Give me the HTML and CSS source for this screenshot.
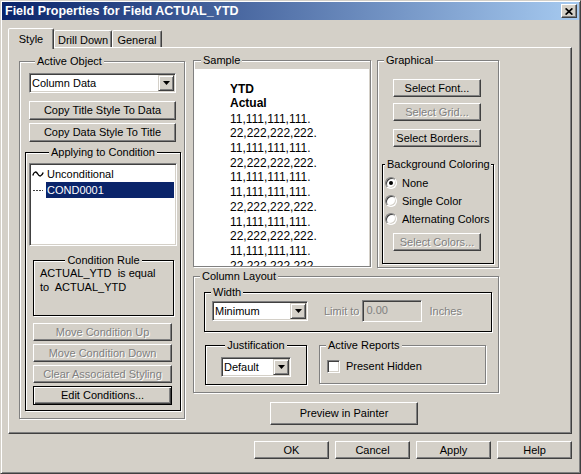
FILE: index.html
```html
<!DOCTYPE html>
<html>
<head>
<meta charset="utf-8">
<title>Field Properties</title>
<link rel="stylesheet" href="styles.css">
</head>
<body>
<div class="window">
  <div class="titlebar">
    <span class="title">Field Properties for Field ACTUAL_YTD</span>
    <div class="close"><svg width="8" height="7" viewBox="0 0 8 7"><path d="M0.6 0.4 L7.4 6.6 M7.4 0.4 L0.6 6.6" stroke="#000" stroke-width="1.7" fill="none"/></svg></div>
  </div>

  <div class="tabs">
    <div class="tab sel t-style">Style</div>
    <div class="tab t-drill">Drill Down</div>
    <div class="tab t-gen">General</div>
  </div>

  <div class="panel">
    <div class="grp g-active">
      <div class="lbl">Active Object</div>
      <div class="combo c-col"><span class="val">Column Data</span><span class="arrow"><svg width="7" height="4" viewBox="0 0 7 4"><path d="M0 0H7L3.5 4Z" fill="#000"/></svg></span></div>
      <div class="btn b-copy1">Copy Title Style To Data</div>
      <div class="btn b-copy2">Copy Data Style To Title</div>
      <div class="grp black g-apply">
        <div class="lbl center">Applying to Condition</div>
        <div class="listbox">
          <div class="lrow">
            <svg class="licon" width="12" height="12" viewBox="0 0 12 12"><path d="M0.8 7.5 C2 3.2, 4.2 3.2, 5.8 6 S 9.6 8.8, 11.2 4.6" stroke="#000" stroke-width="1.4" fill="none"/></svg>
            <span class="item">Unconditional</span>
          </div>
          <div class="lrow">
            <svg class="licon" width="12" height="12" viewBox="0 0 12 12"><path d="M1 6.5 H11" stroke="#404040" stroke-width="1.2" stroke-dasharray="2 1" fill="none"/></svg>
            <span class="item sel">COND0001</span>
          </div>
        </div>
        <div class="grp black g-rule">
          <div class="lbl center">Condition Rule</div>
          <div class="rule-text">ACTUAL_YTD  is equal
to  ACTUAL_YTD</div>
        </div>
        <div class="btn bc dis b-up">Move Condition Up</div>
        <div class="btn bc dis">Move Condition Down</div>
        <div class="btn bc dis">Clear Associated Styling</div>
        <div class="btn bc default b-edit">Edit Conditions...</div>
      </div>
    </div>

    <div class="right">
      <div class="toprow">
        <div class="grp g-sample">
          <div class="lbl">Sample</div>
          <div class="sample-white">
            <div class="hdr">YTD</div>
            <div class="hdr">Actual</div>
            <div class="nums">
              <div>11,111,111,111.</div>
              <div>22,222,222,222.</div>
              <div>11,111,111,111.</div>
              <div>22,222,222,222.</div>
              <div>11,111,111,111.</div>
              <div>11,111,111,111.</div>
              <div>22,222,222,222.</div>
              <div>11,111,111,111.</div>
              <div>22,222,222,222.</div>
              <div>11,111,111,111.</div>
              <div>22,222,222,222.</div>
            </div>
          </div>
        </div>
        <div class="grp g-graph">
          <div class="lbl">Graphical</div>
          <div class="btn gb b-font">Select Font...</div>
          <div class="btn gb dis b-grid">Select Grid...</div>
          <div class="btn gb b-borders">Select Borders...</div>
          <div class="grp black g-bg">
            <div class="lbl tight">Background Coloring</div>
            <div class="radio-row r-first"><span class="radio on"></span><span>None</span></div>
            <div class="radio-row"><span class="radio"></span><span>Single Color</span></div>
            <div class="radio-row"><span class="radio"></span><span>Alternating Colors</span></div>
            <div class="btn gb dis b-colors">Select Colors...</div>
          </div>
        </div>
      </div>

      <div class="grp g-col">
        <div class="lbl">Column Layout</div>
        <div class="grp black g-width">
          <div class="lbl">Width</div>
          <div class="width-row">
            <div class="combo c-min"><span class="val">Minimum</span><span class="arrow"><svg width="7" height="4" viewBox="0 0 7 4"><path d="M0 0H7L3.5 4Z" fill="#000"/></svg></span></div>
            <span class="distext limit">Limit to</span>
            <div class="field">0.00</div>
            <span class="distext inches">Inches</span>
          </div>
        </div>
        <div class="botrow">
          <div class="grp black g-just">
            <div class="lbl center">Justification</div>
            <div class="combo c-def"><span class="val">Default</span><span class="arrow"><svg width="7" height="4" viewBox="0 0 7 4"><path d="M0 0H7L3.5 4Z" fill="#000"/></svg></span></div>
          </div>
          <div class="grp g-ar">
            <div class="lbl">Active Reports</div>
            <div class="check-row"><span class="checkbox"></span><span>Present Hidden</span></div>
          </div>
        </div>
      </div>

      <div class="btn b-preview">Preview in Painter</div>
    </div>
  </div>

  <div class="footer">
    <div class="btn fb">OK</div>
    <div class="btn fb">Cancel</div>
    <div class="btn fb">Apply</div>
    <div class="btn fb">Help</div>
  </div>
</div>
</body>
</html>
```

FILE: styles.css
```css
* { box-sizing: border-box; }

body {
  margin: 0;
  font: 11px/13px "Liberation Sans", Arial, sans-serif;
  color: #000;
  background: #D4D0C8;
}

.window {
  width: 581px;
  height: 474px;
  background: #D4D0C8;
  border: 1px solid;
  border-color: #D4D0C8 #404040 #404040 #D4D0C8;
  box-shadow: inset 1px 1px #fff, inset -1px -1px #808080;
  padding: 1px;
}

/* title bar */
.titlebar {
  height: 18px;
  display: flex;
  align-items: center;
  justify-content: space-between;
  background: linear-gradient(to right, #0A246A, #A6CAF0);
  padding: 0 2px 0 3px;
}
.title {
  color: #fff;
  font-weight: bold;
  font-size: 12.5px;
  white-space: nowrap;
}
.close {
  width: 16px;
  height: 14px;
  background: #D4D0C8;
  border: 1px solid;
  border-color: #fff #404040 #404040 #fff;
  box-shadow: inset -1px -1px #808080;
  display: flex;
  align-items: center;
  justify-content: center;
}

/* tabs */
.tabs {
  display: flex;
  align-items: flex-start;
  margin: 8px 0 0 6px;
  height: 19px;
}
.tab {
  height: 17px;
  margin-top: 2px;
  border: 1px solid;
  border-bottom: none;
  border-color: #fff #404040 transparent #fff;
  box-shadow: inset -1px 0 #808080;
  border-radius: 2px 2px 0 0;
  text-align: center;
  padding-top: 3px;
  line-height: 13px;
  background: #D4D0C8;
  white-space: nowrap;
}
.tab.sel {
  height: 21px;
  margin-top: 0;
  margin-bottom: -2px;
  padding-top: 4px;
  position: relative;
  z-index: 1;
}
.t-style { width: 46px; }
.t-drill { width: 58px; }
.t-gen { width: 50px; }

/* panel */
.panel {
  margin-left: 6px;
  width: 564px;
  height: 387px;
  border: 1px solid;
  border-color: #fff #404040 #404040 #fff;
  box-shadow: inset -1px -1px #808080;
  padding: 12px 0 0 10px;
  display: flex;
  align-items: flex-start;
}

/* footer */
.footer {
  display: flex;
  justify-content: flex-end;
  gap: 6px;
  margin: 7px 0 0 6px;
  width: 564px;
}
.fb { width: 75px; height: 23px; }

/* generic controls */
.btn {
  display: flex;
  align-items: center;
  justify-content: center;
  height: 18px;
  background: #D4D0C8;
  border: 1px solid;
  border-color: #fff #404040 #404040 #fff;
  box-shadow: inset -1px -1px #808080;
  white-space: nowrap;
  flex: none;
}
.btn.dis, .distext {
  color: #808080;
  text-shadow: 1px 1px #fff;
}
.btn.default {
  border-color: #000;
  box-shadow: inset 1px 1px #fff, inset -1px -1px #404040, inset -2px -2px #808080;
}

.grp {
  display: flex;
  flex-direction: column;
  align-items: flex-start;
  border: 1px solid #808080;
  box-shadow: inset 1px 1px #fff, 1px 1px #fff;
  flex: none;
}
.grp.black { border-color: #000; }

.lbl {
  margin: -7px 0 0 6px;
  padding: 0 2px;
  background: #D4D0C8;
  line-height: 13px;
  white-space: nowrap;
}
.lbl.center { align-self: center; margin-left: 0; }
.lbl.tight { margin-left: 2px; padding: 0 1px 0 2px; }

.sunken {
  border: 1px solid;
  border-color: #808080 #fff #fff #808080;
  box-shadow: inset 1px 1px #404040, inset -1px -1px #D4D0C8;
}

.combo {
  display: flex;
  align-items: center;
  height: 20px;
  background: #fff;
  border: 1px solid;
  border-color: #808080 #fff #fff #808080;
  box-shadow: inset 1px 1px #404040, inset -1px -1px #D4D0C8;
  padding: 1px 1px 1px 2px;
  flex: none;
}
.combo .val { flex: 1; white-space: nowrap; }
.arrow {
  width: 16px;
  height: 16px;
  flex: none;
  background: #D4D0C8;
  border: 1px solid;
  border-color: #D4D0C8 #404040 #404040 #D4D0C8;
  box-shadow: inset 1px 1px #fff, inset -1px -1px #808080;
  display: flex;
  align-items: center;
  justify-content: center;
}

/* Active object column */
.g-active {
  width: 166px;
  height: 358px;
  margin-top: 1px;
  padding-left: 9px;
}
.c-col { width: 147px; margin-top: 5px; }
.b-copy1 { width: 147px; height: 19px; margin-top: 8px; }
.b-copy2 { width: 147px; height: 19px; margin-top: 3px; }

.g-apply {
  width: 156px;
  height: 259px;
  margin: 10px 0 0 -4px;
}
.listbox {
  width: 148px;
  height: 83px;
  margin: 4px 0 0 3px;
  background: #fff;
  border: 1px solid;
  border-color: #808080 #fff #fff #808080;
  box-shadow: inset 1px 1px #404040, inset -1px -1px #D4D0C8;
  padding: 2px 2px 0 1px;
}
.lrow {
  display: flex;
  align-items: center;
  height: 16px;
}
.licon { margin-left: 1px; flex: none; }
.item {
  flex: 1;
  margin-left: 2px;
  padding: 0 1px;
  line-height: 16px;
  white-space: nowrap;
}
.item.sel { background: #0A246A; color: #fff; }

.g-rule {
  width: 141px;
  height: 56px;
  margin: 14px 0 0 7px;
}
.rule-text {
  white-space: pre;
  margin: -1px 0 0 6px;
  line-height: 14px;
}
.bc { width: 139px; margin: 3px 0 0 7px; }
.b-up { margin-top: 7px; }
.b-edit { height: 19px; }

/* right side */
.right {
  margin-left: 8px;
  display: flex;
  flex-direction: column;
  align-items: flex-start;
}
.toprow {
  display: flex;
  align-items: flex-start;
  gap: 6px;
}
.g-sample {
  width: 178px;
  height: 207px;
  padding: 0 1px;
}
.sample-white {
  align-self: stretch;
  flex: 1;
  min-height: 0;
  margin-top: 2px;
  background: #fff;
  overflow: hidden;
  padding: 13px 0 0 35px;
  font-size: 12px;
}
.hdr { font-weight: bold; line-height: 14px; }
.nums { margin-top: 1.6px; line-height: 14.7px; }

.g-graph { width: 122px; height: 208px; }
.gb { width: 88px; margin-left: 15px; }
.b-font { margin-top: 12px; }
.b-grid { margin-top: 6px; }
.b-borders { margin-top: 8px; }
.g-bg {
  width: 112px;
  height: 100px;
  margin: 17px 0 0 4px;
}
.radio-row {
  display: flex;
  align-items: center;
  gap: 5px;
  height: 18px;
  padding-left: 2px;
  white-space: nowrap;
}
.r-first { margin-top: 3px; }
.radio {
  width: 12px;
  height: 12px;
  flex: none;
  border-radius: 50%;
  background: #fff;
  border: 1px solid;
  border-color: #808080 #fff #fff #808080;
  box-shadow: inset 1px 1px #404040, inset -1px -1px #D4D0C8;
  display: flex;
  align-items: center;
  justify-content: center;
}
.radio.on::after {
  content: "";
  width: 4px;
  height: 4px;
  border-radius: 50%;
  background: #000;
}
.b-colors { margin: 5px 0 0 10px; }

.g-col { width: 306px; height: 117px; margin-top: 8px; }
.g-width {
  width: 288px;
  height: 40px;
  margin: 9px 0 0 10px;
}
.width-row {
  display: flex;
  align-items: center;
  height: 22px;
  margin: 1px 0 0 7px;
}
.c-min { width: 96px; }
.limit { margin-left: 16px; white-space: nowrap; }
.field {
  width: 60px;
  height: 22px;
  margin-left: 3px;
  background: #D4D0C8;
  color: #808080;
  border: 1px solid;
  border-color: #808080 #fff #fff #808080;
  box-shadow: inset 1px 1px #404040, inset -1px -1px #D4D0C8;
  padding: 3px 0 0 3px;
}
.inches { margin-left: 7px; }

.botrow {
  display: flex;
  align-items: flex-start;
  margin: 13px 0 0 11px;
}
.g-just { width: 102px; height: 40px; }
.c-def { width: 70px; margin: 5px 0 0 15px; }
.g-ar { width: 167px; height: 39px; margin-left: 12px; }
.check-row {
  display: flex;
  align-items: center;
  gap: 6px;
  margin: 8px 0 0 7px;
  height: 13px;
  white-space: nowrap;
}
.checkbox {
  width: 13px;
  height: 13px;
  flex: none;
  background: #fff;
  border: 1px solid;
  border-color: #808080 #fff #fff #808080;
  box-shadow: inset 1px 1px #404040, inset -1px -1px #D4D0C8;
}

.b-preview {
  width: 148px;
  height: 23px;
  margin: 9px 0 0 77px;
}
```
